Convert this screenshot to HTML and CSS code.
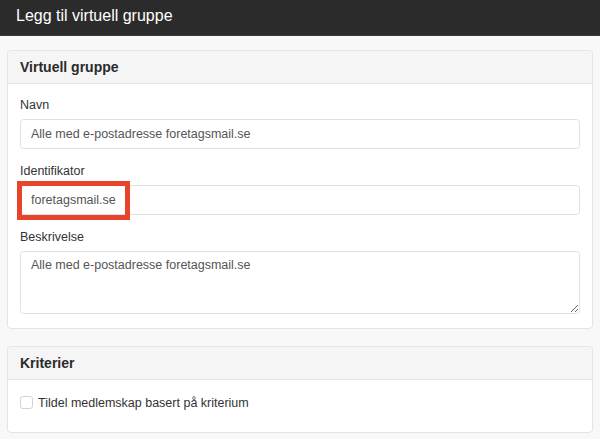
FILE: index.html
```html
<!DOCTYPE html>
<html lang="no">
<head>
  <meta charset="UTF-8" />
  <meta name="viewport" content="width=device-width, initial-scale=1.0"/>
  <title>Legg til virtuell gruppe</title>
  <link rel="stylesheet" href="styles.css">
</head>
<body>

  <div class="topbar">Legg til virtuell gruppe</div>

  <div class="page">

    <!-- Virtuell gruppe -->
    <div class="panel">
      <div class="panel-heading">Virtuell gruppe</div>
      <div class="panel-body">
        <div class="form-group">
          <label for="navn">Navn</label>
          <input id="navn" class="form-control" type="text" value="Alle med e-postadresse foretagsmail.se">
        </div>
        <div class="form-group">
          <label for="ident">Identifikator</label>
          <div class="field-wrap">
            <input id="ident" class="form-control" type="text" value="foretagsmail.se">
            <div class="highlight"></div>
          </div>
        </div>
        <div class="form-group last">
          <label for="beskr">Beskrivelse</label>
          <textarea id="beskr" class="form-control">Alle med e-postadresse foretagsmail.se</textarea>
        </div>
      </div>
    </div>

    <!-- Kriterier -->
    <div class="panel">
      <div class="panel-heading">Kriterier</div>
      <div class="panel-body criteria">
        <label class="check">
          <span class="box"></span>
          Tildel medlemskap basert på kriterium
        </label>
      </div>
    </div>

  </div>

</body>
</html>
```

FILE: styles.css
```css
body {
  font-family: 'Liberation Sans', Arial, sans-serif;
  background: #f8f8f8;
  color: #333;
  margin: 0;
  padding: 0;
  font-size: 12.5px;
}

.topbar {
  background: #2b2b2b;
  color: #fff;
  font-size: 16px;
  line-height: 32px;
  height: 32px;
  padding: 0 16px 3px;
  border-bottom: 1px solid #3c3c3c;
}

.page {
  padding: 14px 7px 0;
}

.panel {
  background: #fff;
  border: 1px solid #e4e4e4;
  border-radius: 4px;
  margin-bottom: 17px;
}

.panel-heading {
  background: #f5f5f5;
  border-bottom: 1px solid #e4e4e4;
  border-radius: 4px 4px 0 0;
  padding: 8px 12px;
  line-height: 16px;
  font-size: 14px;
  font-weight: bold;
  color: #2a2a2a;
}

.panel-body {
  padding: 13px 12px 13px;
}

.form-group {
  margin-bottom: 13.5px;
}

.form-group.last {
  margin-bottom: 1px;
}

.form-group label {
  display: block;
  line-height: 17.8px;
  margin-bottom: 4.5px;
}

.form-control {
  display: block;
  box-sizing: border-box;
  width: 100%;
  height: 30px;
  padding: 0 10px;
  border: 1px solid #e0e0e0;
  border-radius: 3.5px;
  background: #fff;
  color: #555;
  font-family: 'Liberation Sans', Arial, sans-serif;
  font-size: 12.5px;
  margin: 0;
}

textarea.form-control {
  height: 63px;
  padding: 5px 10px;
  line-height: 17.8px;
  resize: vertical;
}

.field-wrap {
  position: relative;
}

.highlight {
  position: absolute;
  left: -3px;
  top: -4px;
  width: 113px;
  height: 39px;
  box-sizing: border-box;
  border: 5px solid #e8432b;
  pointer-events: none;
}

.criteria {
  padding: 14px 12px 20px;
}

.check {
  display: flex;
  align-items: center;
  gap: 5px;
  line-height: 18px;
}

.check .box {
  width: 13px;
  height: 13px;
  box-sizing: border-box;
  border: 1px solid #d2d2d2;
  border-radius: 3px;
  background: #fff;
}
```
